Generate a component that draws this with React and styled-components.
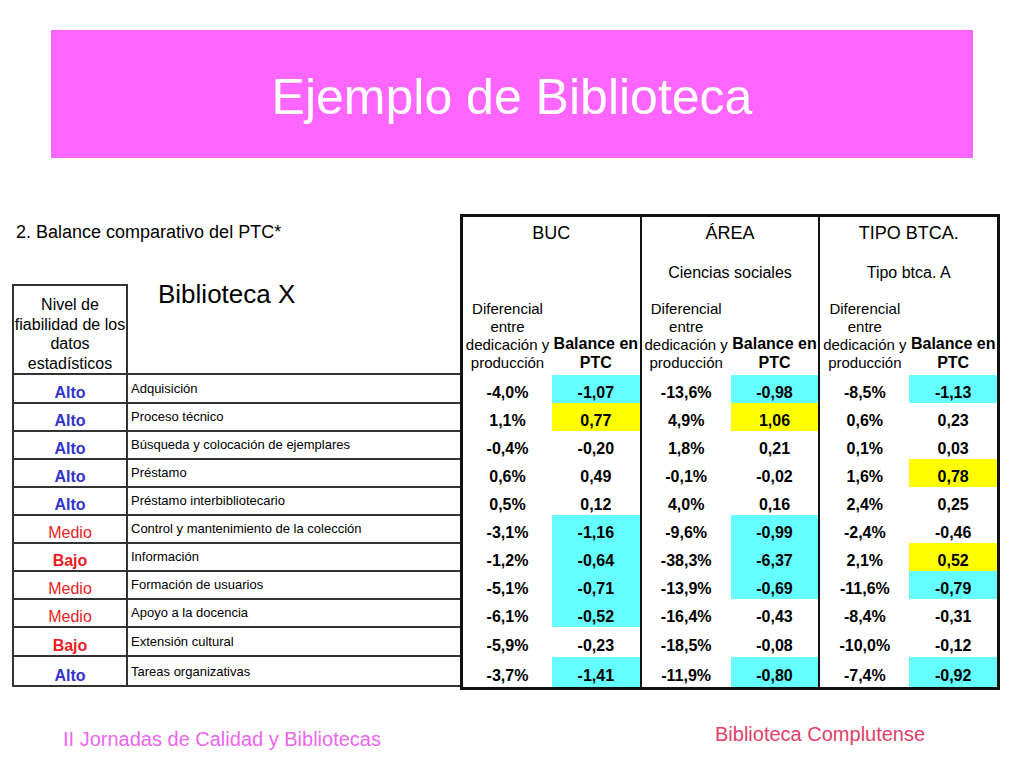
import React from 'react';
import styled, { createGlobalStyle } from 'styled-components';

const Global = createGlobalStyle`
  html, body { margin: 0; padding: 0; background: #ffffff; }
  body { font-family: "Liberation Sans", Arial, Helvetica, sans-serif; color: #000; }
`;

const Page = styled.div`
  width: 1024px;
  height: 768px;
  overflow: hidden;
  background: #fff;
  display: flex;
  flex-direction: column;
`;

const TitleBar = styled.header`
  margin: 30px 51px 0 51px;
  height: 128px;
  background: #ff66ff;
  display: flex;
  align-items: center;
  justify-content: center;
`;

const Title = styled.h1`
  margin: 0;
  padding-top: 6px;
  font-weight: normal;
  font-size: 50px;
  color: #ffffff;
`;

const Main = styled.section`
  margin-top: 56px;
  padding-left: 12px;
  display: flex;
  align-items: stretch;
`;

const LeftPane = styled.div`
  width: 448px;
  display: flex;
  flex-direction: column;
  justify-content: space-between;
  padding-bottom: 3px;
`;

const SectionLabel = styled.div`
  margin-top: 8px;
  padding-left: 4px;
  font-size: 18px;
  line-height: 21px;
`;

const LeftTable = styled.div`
  display: flex;
  flex-direction: column;
`;

const LeftRow = styled.div`
  display: grid;
  grid-template-columns: 116px 1fr;
  height: ${p => p.$h}px;
`;

const LEVEL_COLORS = { Alto: '#3333cc', Medio: '#ee1c24', Bajo: '#ee1c24' };

const LevelHead = styled.div`
  box-sizing: border-box;
  border: 2px solid #333;
  display: flex;
  flex-direction: column;
  justify-content: flex-end;
  align-items: center;
  text-align: center;
  font-size: 16px;
  line-height: 19.5px;
`;

const LibHead = styled.div`
  box-sizing: border-box;
  border-bottom: 2px solid #333;
  padding-left: 30px;
  font-size: 26px;
  line-height: 20px;
`;

const LevelCell = styled.div`
  box-sizing: border-box;
  border-left: 2px solid #333;
  border-right: 2px solid #333;
  border-bottom: 2px solid #333;
  display: flex;
  align-items: center;
  justify-content: center;
  padding-top: 9px;
  font-size: 16px;
  font-weight: ${p => (p.$level === 'Medio' ? 'normal' : 'bold')};
  color: ${p => LEVEL_COLORS[p.$level]};
`;

const ActCell = styled.div`
  box-sizing: border-box;
  border-bottom: 2px solid #333;
  display: flex;
  align-items: center;
  padding: 0 0 0 3px;
  font-size: 13px;
  white-space: nowrap;
`;

const RightTable = styled.div`
  width: 540px;
  box-sizing: border-box;
  border: 3px solid #111;
  display: flex;
`;

const Group = styled.div`
  flex: 1;
  display: flex;
  flex-direction: column;
  border-left: ${p => (p.$first ? 'none' : '2px solid #111')};
`;

const GroupTitle = styled.div`
  height: 33px;
  display: flex;
  align-items: center;
  justify-content: center;
  font-size: 18px;
`;

const GroupSub = styled.div`
  height: 41px;
  box-sizing: border-box;
  padding-top: 14px;
  text-align: center;
  font-size: 16px;
  line-height: 18px;
`;

const PairRow = styled.div`
  display: flex;
  height: ${p => p.$h}px;
`;

const DiffHead = styled.div`
  flex: 0 0 89px;
  display: flex;
  flex-direction: column;
  justify-content: flex-end;
  align-items: center;
  padding-bottom: 3px;
  text-align: center;
  font-size: 15px;
  line-height: 18px;
  white-space: nowrap;
`;

const BalHead = styled.div`
  flex: 1;
  display: flex;
  flex-direction: column;
  justify-content: flex-end;
  align-items: center;
  padding-bottom: 3px;
  text-align: center;
  font-size: 16px;
  font-weight: bold;
  line-height: 19px;
  white-space: nowrap;
`;

const HL = { c: '#66ffff', y: '#ffff00' };

const NumCell = styled.div`
  flex: ${p => (p.$diff ? '0 0 89px' : '1')};
  display: flex;
  align-items: center;
  justify-content: center;
  padding-top: 8px;
  box-sizing: border-box;
  font-size: 16px;
  font-weight: bold;
  background: ${p => (p.$hl ? HL[p.$hl] : 'transparent')};
`;

const Footer = styled.footer`
  display: grid;
  grid-template-columns: 652px auto;
  padding-left: 63px;
  align-items: start;
`;

const FooterText = styled.div`
  margin-top: ${p => p.$top}px;
  font-size: 20px;
  line-height: 23px;
  color: ${p => p.$color};
  white-space: nowrap;
`;

const groups = [
  { title: 'BUC', sub: '' },
  { title: 'ÁREA', sub: 'Ciencias sociales' },
  { title: 'TIPO BTCA.', sub: 'Tipo btca. A' },
];

const rows = [
  { level: 'Alto', act: 'Adquisición', h: 28, v: [['-4,0%', '-1,07', 'c'], ['-13,6%', '-0,98', 'c'], ['-8,5%', '-1,13', 'c']] },
  { level: 'Alto', act: 'Proceso técnico', h: 28, v: [['1,1%', '0,77', 'y'], ['4,9%', '1,06', 'y'], ['0,6%', '0,23', '']] },
  { level: 'Alto', act: 'Búsqueda y colocación de ejemplares', h: 28, v: [['-0,4%', '-0,20', ''], ['1,8%', '0,21', ''], ['0,1%', '0,03', '']] },
  { level: 'Alto', act: 'Préstamo', h: 28, v: [['0,6%', '0,49', ''], ['-0,1%', '-0,02', ''], ['1,6%', '0,78', 'y']] },
  { level: 'Alto', act: 'Préstamo interbibliotecario', h: 28, v: [['0,5%', '0,12', ''], ['4,0%', '0,16', ''], ['2,4%', '0,25', '']] },
  { level: 'Medio', act: 'Control y mantenimiento de la colección', h: 28, v: [['-3,1%', '-1,16', 'c'], ['-9,6%', '-0,99', 'c'], ['-2,4%', '-0,46', '']] },
  { level: 'Bajo', act: 'Información', h: 28, v: [['-1,2%', '-0,64', 'c'], ['-38,3%', '-6,37', 'c'], ['2,1%', '0,52', 'y']] },
  { level: 'Medio', act: 'Formación de usuarios', h: 28, v: [['-5,1%', '-0,71', 'c'], ['-13,9%', '-0,69', 'c'], ['-11,6%', '-0,79', 'c']] },
  { level: 'Medio', act: 'Apoyo a la docencia', h: 28, v: [['-6,1%', '-0,52', 'c'], ['-16,4%', '-0,43', ''], ['-8,4%', '-0,31', '']] },
  { level: 'Bajo', act: 'Extensión cultural', h: 30, v: [['-5,9%', '-0,23', ''], ['-18,5%', '-0,08', ''], ['-10,0%', '-0,12', '']] },
  { level: 'Alto', act: 'Tareas organizativas', h: 30, v: [['-3,7%', '-1,41', 'c'], ['-11,9%', '-0,80', 'c'], ['-7,4%', '-0,92', 'c']] },
];

export default function App() {
  return (
    <>
      <Global />
      <Page>
        <TitleBar>
          <Title>Ejemplo de Biblioteca</Title>
        </TitleBar>
        <Main>
          <LeftPane>
            <SectionLabel>2. Balance comparativo del PTC*</SectionLabel>
            <LeftTable>
              <LeftRow $h={91}>
                <LevelHead>
                  <span>Nivel de</span>
                  <span>fiabilidad de los</span>
                  <span>datos</span>
                  <span>estadísticos</span>
                </LevelHead>
                <LibHead>Biblioteca X</LibHead>
              </LeftRow>
              {rows.map((r, i) => (
                <LeftRow key={i} $h={r.h}>
                  <LevelCell $level={r.level}>{r.level}</LevelCell>
                  <ActCell>{r.act}</ActCell>
                </LeftRow>
              ))}
            </LeftTable>
          </LeftPane>
          <RightTable>
            {groups.map((g, gi) => (
              <Group key={gi} $first={gi === 0}>
                <GroupTitle>{g.title}</GroupTitle>
                <GroupSub>{g.sub}</GroupSub>
                <PairRow $h={84}>
                  <DiffHead>
                    <span>Diferencial</span>
                    <span>entre</span>
                    <span>dedicación y</span>
                    <span>producción</span>
                  </DiffHead>
                  <BalHead>
                    <span>Balance en</span>
                    <span>PTC</span>
                  </BalHead>
                </PairRow>
                {rows.map((r, i) => (
                  <PairRow key={i} $h={r.h}>
                    <NumCell $diff>{r.v[gi][0]}</NumCell>
                    <NumCell $hl={r.v[gi][2]}>{r.v[gi][1]}</NumCell>
                  </PairRow>
                ))}
              </Group>
            ))}
          </RightTable>
        </Main>
        <Footer>
          <FooterText $top={38} $color="#ee66ee">II Jornadas de Calidad y Bibliotecas</FooterText>
          <FooterText $top={33} $color="#e0406a">Biblioteca Complutense</FooterText>
        </Footer>
      </Page>
    </>
  );
}
